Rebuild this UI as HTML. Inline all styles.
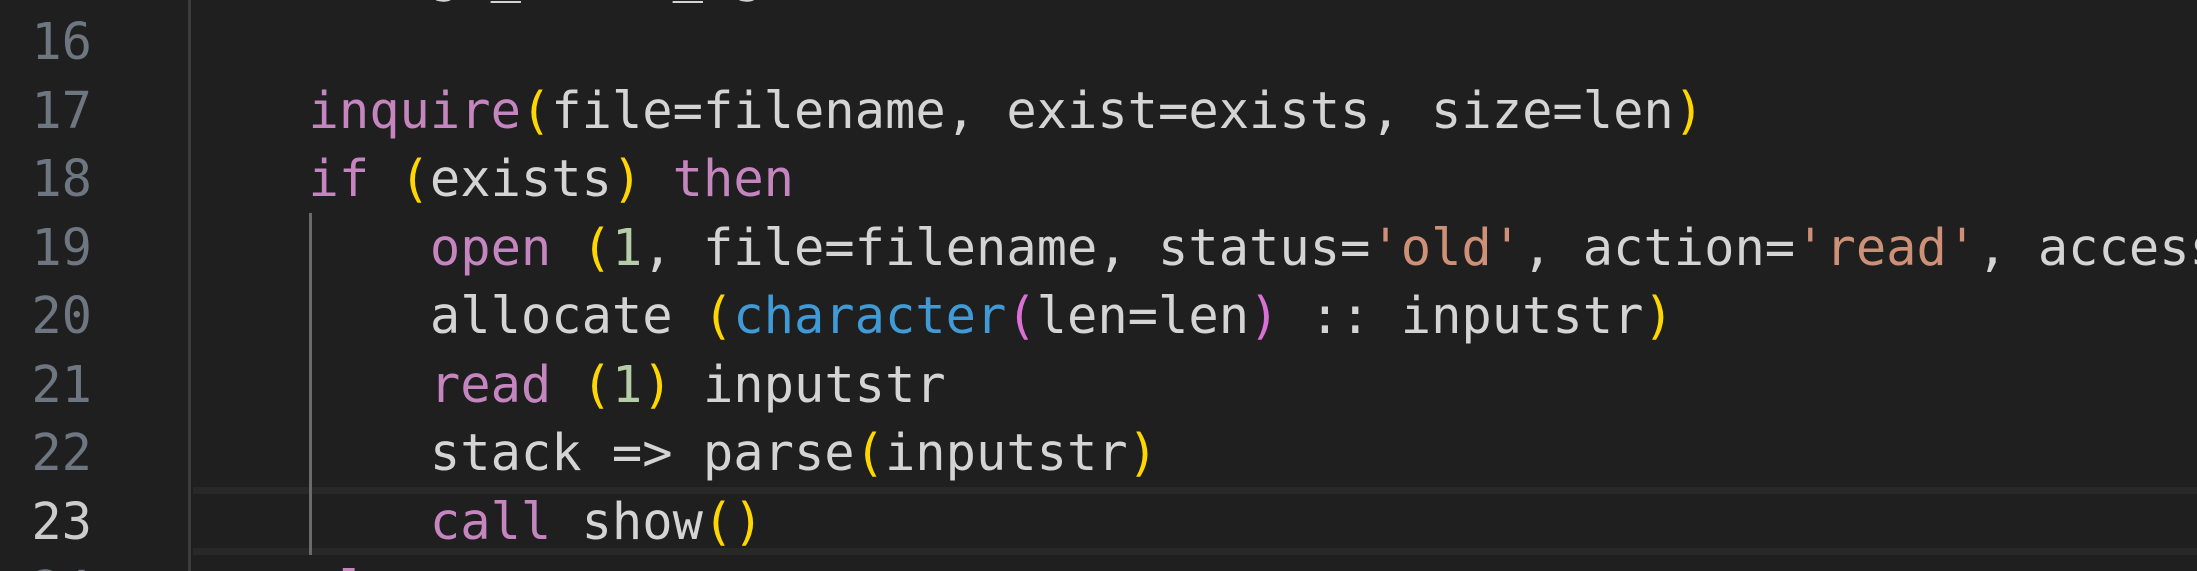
<!DOCTYPE html>
<html><head><meta charset="utf-8"><style>
html,body{margin:0;padding:0;background:#1f1f1f;width:2197px;height:571px;overflow:hidden}
.ed{position:relative;width:2197px;height:571px;overflow:hidden;font-family:"DejaVu Sans Mono","Liberation Mono",monospace;font-size:50.4px;color:#d4d4d4}
.gut{position:absolute;left:188px;top:0;width:3px;height:571px;background:#3c3c3c}
.cur{position:absolute;left:193px;top:487px;width:2004px;height:54px;border-top:7px solid #282828;border-bottom:7px solid #282828}
.guide{position:absolute;left:309px;top:213px;width:3px;height:342px;background:#6a6a6a}
.ln{position:absolute;left:0;width:92px;text-align:right;height:68.5px;line-height:68.5px;color:#6e7681;white-space:pre}
.ln.a{color:#cccccc}
.cd{position:absolute;left:187.2px;height:68.5px;line-height:68.5px;white-space:pre}
.k{color:#c586c0}.y{color:#ffd700}.b{color:#409ad6}.m{color:#da70d6}.s{color:#ce9178}.n{color:#b5cea8}
</style></head><body><div class="ed">
<div class="gut"></div>
<div class="cur"></div>
<div class="guide"></div>
<div class="ln" style="top:-60.5px">15</div>
<div class="ln" style="top:8px">16</div>
<div class="ln" style="top:76.5px">17</div>
<div class="ln" style="top:145px">18</div>
<div class="ln" style="top:213.5px">19</div>
<div class="ln" style="top:282px">20</div>
<div class="ln" style="top:350.5px">21</div>
<div class="ln" style="top:419px">22</div>
<div class="ln a" style="top:487.5px">23</div>
<div class="ln" style="top:556px">24</div>
<div class="cd" style="top:-60.5px">    abcdgx_abcde_ag</div>
<div class="cd" style="top:76.5px">    <span class="k">inquire</span><span class="y">(</span>file=filename, exist=exists, size=len<span class="y">)</span></div>
<div class="cd" style="top:145px">    <span class="k">if</span> <span class="y">(</span>exists<span class="y">)</span> <span class="k">then</span></div>
<div class="cd" style="top:213.5px">        <span class="k">open</span> <span class="y">(</span><span class="n">1</span>, file=filename, status=<span class="s">'old'</span>, action=<span class="s">'read'</span>, access=<span class="s">'stream'</span><span class="y">)</span></div>
<div class="cd" style="top:282px">        allocate <span class="y">(</span><span class="b">character</span><span class="m">(</span>len=len<span class="m">)</span> :: inputstr<span class="y">)</span></div>
<div class="cd" style="top:350.5px">        <span class="k">read</span> <span class="y">(</span><span class="n">1</span><span class="y">)</span> inputstr</div>
<div class="cd" style="top:419px">        stack =&gt; parse<span class="y">(</span>inputstr<span class="y">)</span></div>
<div class="cd" style="top:487.5px">        <span class="k">call</span> show<span class="y">()</span></div>
<div class="cd" style="top:556px">    <span class="k">else</span></div>
</div></body></html>
